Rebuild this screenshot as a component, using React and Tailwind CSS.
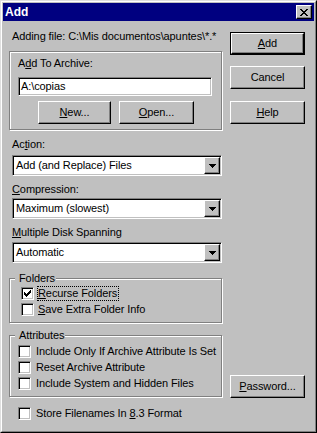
import React from 'react';

const raised = 'border border-t-white border-l-white border-r-black border-b-black shadow-[inset_-1px_-1px_0_#808080]';
const sunken = 'border border-t-[#808080] border-l-[#808080] border-r-white border-b-white shadow-[inset_1px_1px_0_#000,inset_-1px_-1px_0_#c0c0c0]';
const etched = 'border border-[#808080] shadow-[inset_1px_1px_0_#fff,1px_1px_0_#fff]';

const Pix = ({ rows }) => (
  <svg width={rows[0].length} height={rows.length} shapeRendering="crispEdges">
    {rows.map((r, y) =>
      r.split('').map((c, x) => (c === 'x' ? <rect key={`${x}-${y}`} x={x} y={y} width="1" height="1" fill="#000" /> : null))
    )}
  </svg>
);

const closeX = ['xx....xx', '.xx..xx.', '..xxxx..', '...xx...', '..xxxx..', '.xx..xx.', 'xx....xx'];
const tick = ['......x', '.....xx', 'x...xxx', 'xx.xxx.', 'xxxxx..', '.xxx...', '..x....'];
const arrow = ['xxxxxxx', '.xxxxx.', '..xxx..', '...x...'];

const Button = ({ children, className = '' }) => (
  <div className={`h-[23px] flex items-center justify-center bg-[#c0c0c0] ${raised} ${className}`}>{children}</div>
);

const Check = ({ checked }) => (
  <div className={`w-[13px] h-[13px] shrink-0 bg-white flex items-center justify-center ${sunken}`}>
    {checked && <Pix rows={tick} />}
  </div>
);

const Row = ({ checked, children }) => (
  <div className="flex items-center h-[13px]">
    <Check checked={checked} />
    <span className="ml-[5px] whitespace-nowrap">{children}</span>
  </div>
);

const Combo = ({ value }) => (
  <div className={`ml-[3px] w-[210px] h-[21px] bg-white p-px flex ${sunken}`}>
    <div className="flex-1 pl-[2px] flex items-center whitespace-nowrap">{value}</div>
    <div className={`w-[16px] h-[17px] flex items-center justify-center bg-[#c0c0c0] ${raised}`}>
      <Pix rows={arrow} />
    </div>
  </div>
);

const Group = ({ label, className = '', children }) => (
  <div className={`relative ${etched} ${className}`}>
    <span className="absolute -top-[7px] left-[5px] pl-[4px] pr-px bg-[#c0c0c0]">{label}</span>
    {children}
  </div>
);

export default function App() {
  return (
    <div className="w-[317px] h-[433px] bg-[#c0c0c0] border border-t-[#dfdfdf] border-l-[#dfdfdf] border-r-black border-b-black font-[family-name:'Liberation_Sans',Arial,sans-serif] text-[11px] leading-[13px] tracking-[-0.1px] text-black">
      <div className="h-full border border-t-white border-l-white border-r-[#808080] border-b-[#808080] p-px flex flex-col">
        <div className="h-[18px] bg-[#000080] flex items-center justify-between pl-[2px] pr-[2px]">
          <span className="text-white font-bold text-[12px] tracking-normal">Add</span>
          <div className={`w-[16px] h-[14px] flex items-center justify-center bg-[#c0c0c0] ${raised}`}>
            <Pix rows={closeX} />
          </div>
        </div>

        <div className="flex-1 flex">
          <div className="w-[219px] pl-[6px] flex flex-col">
            <div className="mt-[9px] ml-[3px] whitespace-nowrap">Adding file: C:\Mis documentos\apuntes\*.*</div>

            <div className={`mt-[8px] h-[79px] pt-[5px] pl-[8px] ${etched}`}>
              <div>A<u>d</u>d To Archive:</div>
              <div className={`mt-[7px] w-[194px] h-[19px] bg-white p-px pl-[2px] flex items-center ${sunken}`}>A:\copias</div>
              <div className="mt-[5px] ml-[20px] flex gap-[8px]">
                <Button className="w-[73px]"><span><u>N</u>ew...</span></Button>
                <Button className="w-[75px]"><span><u>O</u>pen...</span></Button>
              </div>
            </div>

            <div className="mt-[8px] ml-[3px]">Ac<u>t</u>ion:</div>
            <div className="mt-[4px]"><Combo value="Add (and Replace) Files" /></div>

            <div className="mt-[7px] ml-[3px]"><u>C</u>ompression:</div>
            <div className="mt-[2px]"><Combo value="Maximum (slowest)" /></div>

            <div className="mt-[7px] ml-[3px]"><u>M</u>ultiple Disk Spanning</div>
            <div className="mt-[3px]"><Combo value="Automatic" /></div>

            <Group label="Folders" className="mt-[15px] h-[45px] pt-[8px] pl-[11px]">
              <div className="flex flex-col gap-[3px]">
                <div className="flex items-center h-[13px]">
                  <Check checked />
                  <span className="ml-[3px] pr-px border border-dotted border-black leading-[13px] whitespace-nowrap">
                    <u>R</u>ecurse Folders
                  </span>
                </div>
                <div className="flex items-center h-[13px]">
                  <Check />
                  <span className="ml-[4px] whitespace-nowrap"><u>S</u>ave Extra Folder Info</span>
                </div>
              </div>
            </Group>

            <Group label="Attributes" className="mt-[12px] h-[62px] pt-[9px] pl-[8px]">
              <div className="flex flex-col gap-[3px]">
                <Row>Include Only If Archive Attribute Is Set</Row>
                <Row>Reset Archive Attribute</Row>
                <Row>Include System and Hidden Files</Row>
              </div>
            </Group>

            <div className="mt-[10px] ml-[9px]">
              <Row>Store Filenames In <u>8</u>.3 Format</Row>
            </div>
          </div>

          <div className="ml-[8px] w-[75px] flex flex-col">
            <div className="mt-[11px] h-[23px] border border-black flex">
              <div className={`flex-1 flex items-center justify-center ${raised}`}><span><u>A</u>dd</span></div>
            </div>
            <Button className="mt-[11px]">Cancel</Button>
            <Button className="mt-[12px]"><span><u>H</u>elp</span></Button>
            <Button className="mt-[251px]"><span><u>P</u>assword...</span></Button>
          </div>
        </div>
      </div>
    </div>
  );
}
